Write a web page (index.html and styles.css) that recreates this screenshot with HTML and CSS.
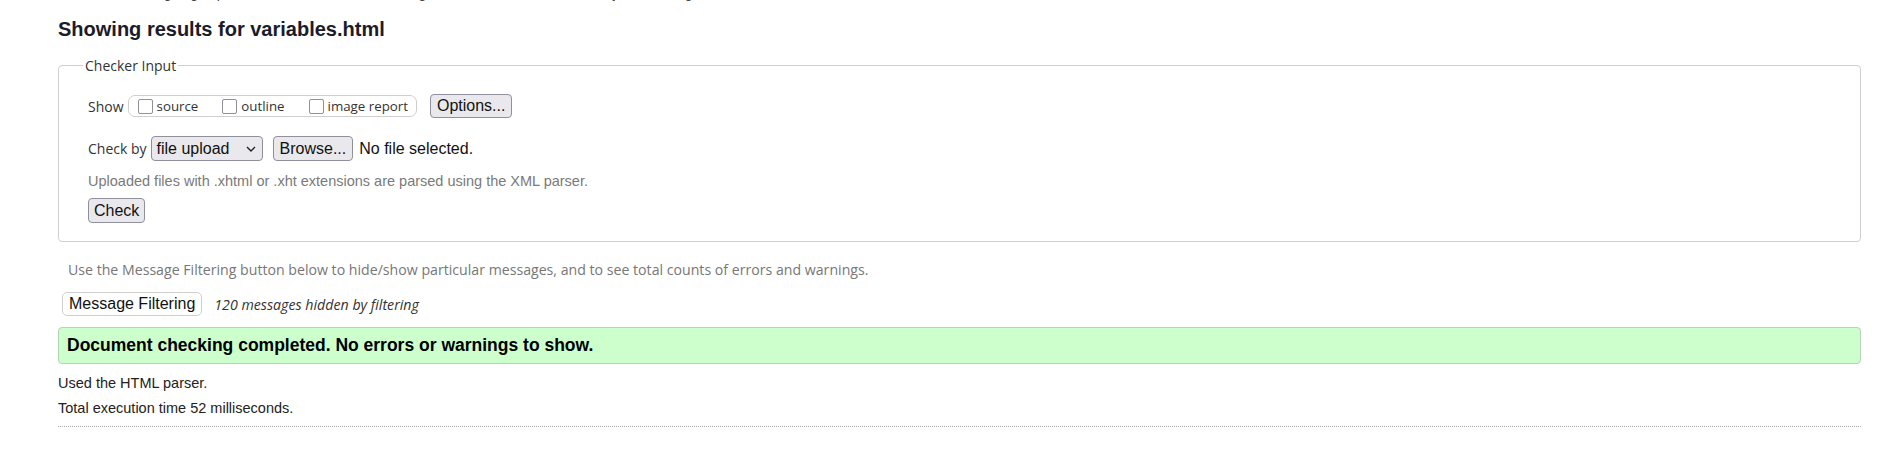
FILE: index.html
```html
<!DOCTYPE html>
<html>
<head>
<meta charset="utf-8">
<link rel="stylesheet" href="styles.css">
</head>
<body>
<div class="page">
  <p class="intro">This tool is an ongoing experiment in better HTML checking, and its behavior remains subject to change</p>
  <h2 class="title">Showing results for variables.html</h2>
  <fieldset class="checker">
    <legend class="legend">Checker Input</legend>
    <div class="row row-show">
      <span class="label">Show</span>
      <span class="group">
        <label class="opt"><span class="box"></span>source</label>
        <label class="opt"><span class="box"></span>outline</label>
        <label class="opt"><span class="box"></span>image report</label>
      </span>
      <button class="btn btn-options">Options...</button>
    </div>
    <div class="row row-check">
      <span class="label">Check by</span>
      <span class="select">file upload
        <svg class="chev" width="10" height="6" viewBox="0 0 10 6"><path d="M1 1 L5 5 L9 1" fill="none" stroke="#222" stroke-width="1.4"/></svg>
      </span>
      <button class="btn btn-browse">Browse...</button>
      <span class="nofile">No file selected.</span>
    </div>
    <p class="hint">Uploaded files with .xhtml or .xht extensions are parsed using the XML parser.</p>
    <button class="btn btn-check">Check</button>
  </fieldset>
  <p class="filter-note">Use the Message Filtering button below to hide/show particular messages, and to see total counts of errors and warnings.</p>
  <div class="filter-row">
    <button class="btn-filter">Message Filtering</button>
    <em class="hidden-count">120 messages hidden by filtering</em>
  </div>
  <div class="success">Document checking completed. No errors or warnings to show.</div>
  <p class="stat stat-first">Used the HTML parser.</p>
  <p class="stat stat-second">Total execution time 52 milliseconds.</p>
  <hr class="rule">
</div>
</body>
</html>
```

FILE: styles.css
```css
html, body {
  margin: 0;
  padding: 0;
  background: #fff;
}
body {
  font-family: "Liberation Sans", Arial, sans-serif;
  color: #222;
}
.page {
  display: flow-root;
  margin-left: 58px;
  width: 1803px;
}
.intro {
  margin: -15px 0 0;
  font-size: 14px;
  line-height: 16px;
  color: #444;
  white-space: nowrap;
}
.title {
  margin: 16px 0 0;
  font-size: 20px;
  line-height: 24px;
  font-weight: bold;
  color: #1c1c28;
}
.checker {
  margin: 16px 0 0;
  padding: 20px 29px 18px;
  border: 1px solid #cfcfcf;
  border-radius: 4px;
  min-width: 0;
}
.legend {
  margin-left: -5px;
  padding: 0 2px;
  font-family: "Open Sans", sans-serif;
  font-size: 14px;
  line-height: 17px;
  color: #333;
}
.row {
  display: flex;
  align-items: center;
}
.row-show {
  height: 24px;
}
.label {
  font-family: "Open Sans", sans-serif;
  font-size: 14px;
  color: #333;
  margin-right: 4px;
}
.group {
  display: inline-flex;
  align-items: center;
  height: 22px;
  box-sizing: border-box;
  border: 1px solid #cfcfcf;
  border-radius: 7px;
  padding: 0 8px 0 9px;
  gap: 24px;
}
.opt {
  display: inline-flex;
  align-items: center;
  font-family: "Open Sans", sans-serif;
  font-size: 13.3px;
  color: #333;
  gap: 4px;
}
.box {
  width: 15px;
  height: 15px;
  box-sizing: border-box;
  border: 1.5px solid #8f8f9d;
  border-radius: 2px;
  background: #fff;
}
.btn {
  font-family: "Liberation Sans", Arial, sans-serif;
  font-size: 16px;
  line-height: 18px;
  color: #111;
  background: #e9e9ed;
  border: 1px solid #8f8f9d;
  border-radius: 4px;
  padding: 2px 6px;
  margin: 0;
}
.btn-options {
  margin-left: 13px;
  height: 24px;
}
.row-check {
  margin-top: 18px;
  height: 25px;
}
.select {
  display: inline-flex;
  align-items: center;
  box-sizing: border-box;
  height: 25px;
  width: 112px;
  padding: 0 6px 0 5px;
  justify-content: space-between;
  font-size: 16px;
  color: #111;
  background: #e9e9ed;
  border: 1px solid #8f8f9d;
  border-radius: 4px;
  margin-right: 10px;
}
.chev {
  margin-left: 6px;
}
.btn-browse {
  height: 25px;
  padding: 0 6px;
}
.nofile {
  font-size: 16px;
  color: #111;
  margin-left: 6px;
}
.hint {
  margin: 11px 0 0;
  font-size: 14.5px;
  line-height: 18px;
  color: #7a7a7a;
}
.btn-check {
  margin-top: 8px;
  height: 25px;
  padding: 0 5px;
}
.filter-note {
  margin: 19px 0 0 10px;
  font-family: "Open Sans", sans-serif;
  font-size: 14.15px;
  line-height: 18px;
  color: #777;
}
.filter-row {
  display: flex;
  align-items: center;
  margin: 13px 0 0 4px;
  height: 24px;
}
.btn-filter {
  font-family: "Liberation Sans", Arial, sans-serif;
  font-size: 16px;
  line-height: 18px;
  color: #111;
  background: #fff;
  border: 1px solid #cfcfcf;
  border-radius: 5px;
  padding: 2px 6px;
  height: 24px;
  margin: 0;
}
.hidden-count {
  font-family: "Open Sans", sans-serif;
  font-style: italic;
  font-size: 14.2px;
  color: #333;
  margin-left: 12px;
}
.success {
  margin-top: 11px;
  box-sizing: border-box;
  height: 37px;
  padding: 0 8px;
  display: flex;
  align-items: center;
  background: #ccffcc;
  border: 1px solid #b4d4b4;
  border-radius: 4px;
  font-size: 17.5px;
  font-weight: bold;
  color: #000;
}
.stat {
  margin: 0;
  font-size: 14.5px;
  line-height: 18px;
  color: #222;
}
.stat-first {
  margin-top: 10px;
}
.stat-second {
  margin-top: 7px;
}
.rule {
  margin: 9px 0 0;
  border: 0;
  border-top: 1px dotted #aaa;
  height: 0;
}
```
